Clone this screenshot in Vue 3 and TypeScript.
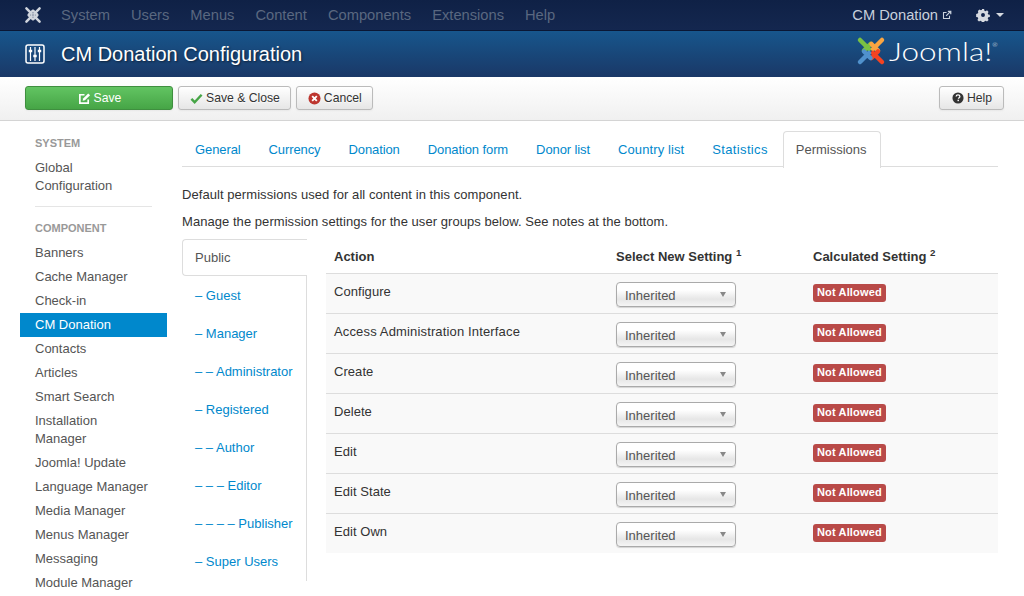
<script setup lang="ts">
const menu: string[] = ['System', 'Users', 'Menus', 'Content', 'Components', 'Extensions', 'Help']
const sideItems: string[] = ['Banners', 'Cache Manager', 'Check-in', 'CM Donation', 'Contacts', 'Articles', 'Smart Search', 'Installation Manager', 'Joomla! Update', 'Language Manager', 'Media Manager', 'Menus Manager', 'Messaging', 'Module Manager']
const tabs: string[] = ['General', 'Currency', 'Donation', 'Donation form', 'Donor list', 'Country list', 'Statistics', 'Permissions']
const groups: string[] = ['– Guest', '– Manager', '– – Administrator', '– Registered', '– – Author', '– – – Editor', '– – – – Publisher', '– Super Users']
const actions: string[] = ['Configure', 'Access Administration Interface', 'Create', 'Delete', 'Edit', 'Edit State', 'Edit Own']
const arm = 'M4 4 L13 13 M8 14.500 L14.500 8'
const logoArms: { color: string; rot: number }[] = [
  { color: '#7ac143', rot: 0 },
  { color: '#f9a541', rot: 90 },
  { color: '#f44321', rot: 180 },
  { color: '#5091cd', rot: 270 },
]
</script>

<template>
  <div class="page">
    <nav class="navbar">
      <svg class="jlogo" viewBox="0 0 30 30" width="18" height="18">
        <path v-for="a in logoArms" :key="a.rot" :d="arm" :transform="`rotate(${a.rot} 15 15)`" fill="none" stroke="#d0d5dd" stroke-width="4.200" stroke-linecap="round" stroke-linejoin="round" />
      </svg>
      <ul class="menu">
        <li v-for="m in menu" :key="m">{{ m }}</li>
      </ul>
      <div class="nav-right">
        <span class="site">CM Donation
          <svg viewBox="0 0 12 12" width="10" height="10" class="ext">
            <path d="M9 7 V10.200 H1.800 V3 H5.500" fill="none" stroke="#c8d0dc" stroke-width="1.300" />
            <path d="M5 7 L10 2 M7 1.500 H10.500 V5" fill="none" stroke="#c8d0dc" stroke-width="1.500" />
          </svg>
        </span>
        <span class="gear">
          <svg viewBox="0 0 16 16" width="14" height="14">
            <path fill="#d5d9e0" fill-rule="evenodd" d="M6.600 0.500h2.800l.4 2 1.500.7 1.800-1.100 2 2-1.100 1.800.7 1.500 2 .4v2.800l-2 .4-.7 1.500 1.100 1.800-2 2-1.800-1.100-1.500.7-.4 2H6.600l-.4-2-1.500-.7-1.800 1.100-2-2 1.100-1.800-.7-1.500-2-.4V6.600l2-.4.7-1.500L1.500 2.900l2-2 1.800 1.100 1.500-.7zM8 5.500a2.500 2.500 0 1 0 0 5 2.500 2.500 0 0 0 0-5z" transform="translate(.8 .8) scale(.9)" />
          </svg>
          <i class="caret"></i>
        </span>
      </div>
    </nav>

    <header class="head">
      <svg class="cfg" viewBox="0 0 20 20" width="20" height="20">
        <rect x="1" y="1" width="18" height="18" rx="2" fill="none" stroke="#fff" stroke-width="1.500" />
        <path d="M5.500 3v14M10 3v14M14.500 3v14" stroke="#fff" stroke-width="1.200" />
        <path d="M3.800 7h3.400M8.300 12h3.400M12.800 7h3.400" stroke="#fff" stroke-width="2.400" />
      </svg>
      <h1>CM Donation Configuration</h1>
      <div class="brand">
        <svg viewBox="0 0 30 30" width="30" height="30">
          <path v-for="a in logoArms" :key="a.rot" :d="arm" :transform="`rotate(${a.rot} 15 15)`" fill="none" :stroke="a.color" stroke-width="4.500" stroke-linecap="round" stroke-linejoin="round" />
        </svg>
        <span class="wordmark">Joomla!<sup>®</sup></span>
      </div>
    </header>

    <div class="toolbar">
      <button class="btn save">
        <svg viewBox="0 0 14 14" width="13" height="13">
          <path d="M11 8v4H2V3h5" fill="none" stroke="#fff" stroke-width="1.800" />
          <path d="M5 9.500l.5-2.500L11 1.500l2 2L7.500 9z" fill="#fff" />
        </svg>
        Save
      </button>
      <button class="btn">
        <svg viewBox="0 0 14 14" width="13" height="13">
          <path d="M1.500 7.500l3.500 3.500 7.500-8" fill="none" stroke="#46a546" stroke-width="2.600" />
        </svg>
        Save &amp; Close
      </button>
      <button class="btn">
        <svg viewBox="0 0 14 14" width="13" height="13">
          <circle cx="7" cy="7" r="6.500" fill="#bd362f" />
          <path d="M4.500 4.500l5 5M9.500 4.500l-5 5" stroke="#fff" stroke-width="2" />
        </svg>
        Cancel
      </button>
      <button class="btn help">
        <svg viewBox="0 0 14 14" width="12" height="12">
          <circle cx="7" cy="7" r="6.500" fill="#333" />
          <path d="M4.800 5.300C4.900 3.900 5.900 3.300 7 3.300c1.300 0 2.200.8 2.200 1.900 0 1.500-1.700 1.500-1.700 2.800" fill="none" stroke="#fff" stroke-width="1.500" />
          <rect x="6.400" y="9" width="1.700" height="1.700" fill="#fff" />
        </svg>
        Help
      </button>
    </div>

    <div class="body">
      <aside class="side">
        <div class="side-head">SYSTEM</div>
        <a class="side-item">Global Configuration</a>
        <hr />
        <div class="side-head">COMPONENT</div>
        <a v-for="s in sideItems" :key="s" class="side-item" :class="{ active: s === 'CM Donation' }">{{ s }}</a>
      </aside>

      <main class="content">
        <ul class="tabs">
          <li v-for="t in tabs" :key="t" :class="{ on: t === 'Permissions' }">{{ t }}</li>
        </ul>
        <p class="p1">Default permissions used for all content in this component.</p>
        <p class="p2">Manage the permission settings for the user groups below. See notes at the bottom.</p>
        <div class="perm">
          <ul class="groups">
            <li class="on">Public</li>
            <li v-for="g in groups" :key="g">{{ g }}</li>
          </ul>
          <table>
            <thead>
              <tr>
                <th class="c1">Action</th>
                <th class="c2">Select New Setting <sup>1</sup></th>
                <th class="c3">Calculated Setting <sup>2</sup></th>
              </tr>
            </thead>
            <tbody>
              <tr v-for="a in actions" :key="a">
                <td class="c1"><span class="act">{{ a }}</span></td>
                <td class="c2"><div class="sel">Inherited<i></i></div></td>
                <td class="c3"><span class="label">Not Allowed</span></td>
              </tr>
            </tbody>
          </table>
        </div>
      </main>
    </div>
  </div>
</template>

<style>
html, body { margin: 0; overflow: hidden; background: #fff; }
</style>

<style scoped>
.page { width: 1024px; height: 596px; overflow: hidden; font-family: "Liberation Sans", Arial, sans-serif; font-size: 13px; line-height: 18px; color: #333; }
.navbar { height: 30px; display: flex; align-items: center; padding-left: 24px; padding-right: 20px; background: linear-gradient(#0f2146, #14274f); border-bottom: 1px solid #0a1734; }
.jlogo { flex: none; }
.menu { display: flex; list-style: none; margin: 0 0 0 19px; padding: 0; gap: 21px; font-size: 14.700px; color: #5a6880; }
.nav-right { margin-left: auto; display: flex; align-items: center; font-size: 14.700px; color: #c8d0dc; }
.site { display: flex; align-items: center; gap: 4px; }
.gear { display: flex; align-items: center; margin-left: 24px; gap: 6px; }
.caret { width: 0; height: 0; border-left: 4px solid transparent; border-right: 4px solid transparent; border-top: 4px solid #d5d9e0; }
.head { height: 46px; display: flex; align-items: center; padding-left: 25px; padding-right: 26px; background: linear-gradient(#17568c, #1a3867); }
.cfg { flex: none; }
h1 { margin: 0 0 0 16px; font-size: 20px; font-weight: 400; color: #fff; text-shadow: 1px 1px 2px rgba(0,0,0,.5); }
.brand { margin-left: auto; display: flex; align-items: center; gap: 3px; margin-top: -6px; }
.wordmark { display: block; width: 109px; margin-top: -1px; font-family: Lato, sans-serif; font-size: 25px; font-weight: 300; color: #fff; line-height: 30px; white-space: nowrap; transform: scaleX(1.260); transform-origin: left center; }
.wordmark sup { font-size: 5px; vertical-align: 14px; line-height: 0; }
.toolbar { height: 44px; box-sizing: border-box; padding-top: 9px; display: flex; align-items: flex-start; gap: 5px; padding-left: 25px; padding-right: 20px; background: linear-gradient(#fff, #f0f0f0); border-bottom: 1px solid #d4d4d4; }
.btn { height: 24px; box-sizing: border-box; padding: 0 10px 0 11px; display: flex; align-items: center; justify-content: center; gap: 3px; font: inherit; font-size: 12.200px; color: #333; background: linear-gradient(#fff, #e6e6e6); border: 1px solid #bbb; border-radius: 3px; box-shadow: 0 1px 2px rgba(0,0,0,.05); text-shadow: 0 1px 1px rgba(255,255,255,.75); }
.save { width: 148px; color: #fff; background: linear-gradient(#62c462, #46a546); border-color: #3f8f3f; text-shadow: none; }
.help { margin-left: auto; width: 65px; }
.body { display: flex; }
.side { width: 147px; margin-left: 20px; padding-top: 13px; flex: none; }
.side-head { padding-left: 15px; font-size: 11px; font-weight: 700; color: #999; line-height: 18px; }
.side-item { display: block; padding: 3px 15px; color: #555; }
.side-head + .side-item { margin-top: 4px; }
.side-item.active { background: #0088cc; color: #fff; }
hr { margin: 8px 15px 12px; border: 0; border-top: 1px solid #e5e5e5; }
.content { margin-left: 15px; width: 816px; flex: none; }
.tabs { list-style: none; display: flex; margin: 10px 0 0; padding: 0; height: 35px; border-bottom: 1px solid #ddd; color: #08c; box-sizing: content-box; }
.tabs li { padding: 9px 12px 8px; margin-right: 2px; line-height: 18px; border: 1px solid transparent; border-bottom: 0; height: 18px; letter-spacing: -.1px; }
.tabs li:nth-child(6) { letter-spacing: .1px; }
.tabs li:nth-child(7) { letter-spacing: .35px; }
.tabs li.on { color: #555; background: #fff; border-color: #ddd; border-radius: 4px 4px 0 0; height: 19px; padding-right: 13px; letter-spacing: 0; }
.p1 { margin: 19px 0 0; letter-spacing: .06px; }
.p2 { margin: 9px 0 0; letter-spacing: .05px; }
.perm { display: flex; margin-top: 8px; }
.groups { list-style: none; margin: 0; padding: 0; width: 124px; flex: none; color: #08c; border-right: 1px solid #ddd; height: 342px; }
.groups li { height: 38px; box-sizing: border-box; padding: 11px 13px 9px; }
.groups li.on { color: #555; height: 37px; width: 125px; background: #fff; border: 1px solid #ddd; border-right: 0; border-radius: 4px 0 0 4px; padding: 9px 12px; position: relative; }
table { margin-left: 19px; width: 672px; border-collapse: collapse; align-self: flex-start; table-layout: fixed; }
th { text-align: left; height: 34px; padding: 2px 8px 0; font-weight: 700; color: #333; box-sizing: border-box; }
th sup { font-size: 9.750px; line-height: 0; }
td { height: 40px; padding: 0 8px; border-top: 1px solid #ddd; background: #f9f9f9; box-sizing: border-box; vertical-align: top; }
.c1 { width: 282px; }
.c2 { width: 197px; }
.act { display: block; padding-top: 9px; letter-spacing: .05px; }
tr:nth-child(2) .act { letter-spacing: .15px; }
.sel { position: relative; width: 120px; height: 25px; margin-top: 8px; box-sizing: border-box; padding: 5px 8px 0; color: #555; background: linear-gradient(#fff 0%, #fff 30%, #e6e6e6 70%, #f5f5f5); border: 1px solid #aaa; border-radius: 4px; box-shadow: 0 1px 1px rgba(0,0,0,.15); line-height: 16px; }
.sel i { position: absolute; right: 9px; top: 9px; width: 0; height: 0; border-left: 3.500px solid transparent; border-right: 3.500px solid transparent; border-top: 5px solid #888; }
.label { display: inline-block; margin-top: 10px; height: 18px; box-sizing: border-box; padding: 0 4px; background: #b94a48; color: #fff; font-size: 11px; font-weight: 700; line-height: 17px; border-radius: 3px; letter-spacing: .15px; }
</style>
